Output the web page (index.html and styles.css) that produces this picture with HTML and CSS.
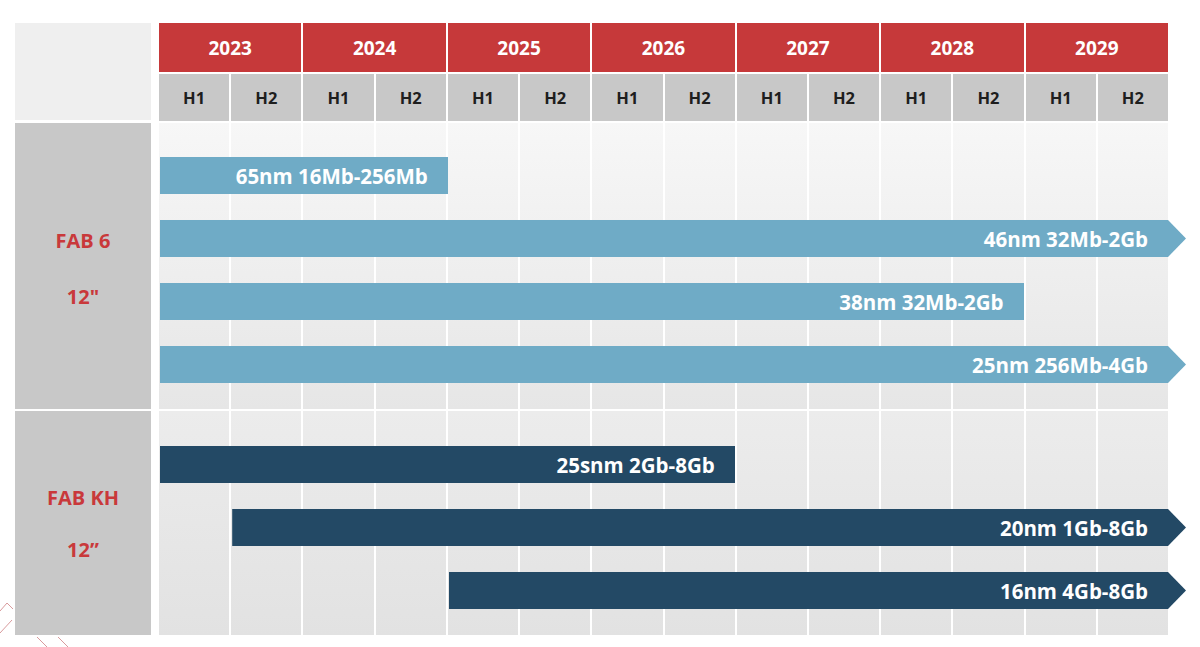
FILE: index.html
```html
<!DOCTYPE html>
<html>
<head>
<meta charset="utf-8">
<link rel="stylesheet" href="styles.css">
</head>
<body>
<div class="page">
  <div class="chart">
    <div class="corner"></div>
    <div class="header">
      <div class="year">2023</div><div class="year">2024</div><div class="year">2025</div><div class="year">2026</div><div class="year">2027</div><div class="year">2028</div><div class="year">2029</div>
      <div class="half">H1</div><div class="half">H2</div>
      <div class="half">H1</div><div class="half">H2</div>
      <div class="half">H1</div><div class="half">H2</div>
      <div class="half">H1</div><div class="half">H2</div>
      <div class="half">H1</div><div class="half">H2</div>
      <div class="half">H1</div><div class="half">H2</div>
      <div class="half">H1</div><div class="half">H2</div>
    </div>

    <div class="label label-fab6"><span>FAB 6</span><span>12"</span></div>
    <div class="lane lane-fab6">
      <div class="col" style="grid-column:1"></div><div class="col" style="grid-column:2"></div><div class="col" style="grid-column:3"></div><div class="col" style="grid-column:4"></div><div class="col" style="grid-column:5"></div><div class="col" style="grid-column:6"></div><div class="col" style="grid-column:7"></div><div class="col" style="grid-column:8"></div><div class="col" style="grid-column:9"></div><div class="col" style="grid-column:10"></div><div class="col" style="grid-column:11"></div><div class="col" style="grid-column:12"></div><div class="col" style="grid-column:13"></div><div class="col" style="grid-column:14"></div>
      <div class="bar light extend" style="grid-row:2;grid-column:1 / 5">65nm 16Mb-256Mb</div>
      <div class="bar light arrow" style="grid-row:3;grid-column:1 / 15">46nm 32Mb-2Gb</div>
      <div class="bar light" style="grid-row:4;grid-column:1 / 13">38nm 32Mb-2Gb</div>
      <div class="bar light arrow" style="grid-row:5;grid-column:1 / 15">25nm 256Mb-4Gb</div>
    </div>

    <div class="label label-kh"><span>FAB KH</span><span>12”</span></div>
    <div class="lane lane-kh">
      <div class="col" style="grid-column:1"></div><div class="col" style="grid-column:2"></div><div class="col" style="grid-column:3"></div><div class="col" style="grid-column:4"></div><div class="col" style="grid-column:5"></div><div class="col" style="grid-column:6"></div><div class="col" style="grid-column:7"></div><div class="col" style="grid-column:8"></div><div class="col" style="grid-column:9"></div><div class="col" style="grid-column:10"></div><div class="col" style="grid-column:11"></div><div class="col" style="grid-column:12"></div><div class="col" style="grid-column:13"></div><div class="col" style="grid-column:14"></div>
      <div class="bar dark" style="grid-row:2;grid-column:1 / 9">25snm 2Gb-8Gb</div>
      <div class="bar dark arrow" style="grid-row:3;grid-column:2 / 15">20nm 1Gb-8Gb</div>
      <div class="bar dark arrow" style="grid-row:4;grid-column:5 / 15">16nm 4Gb-8Gb</div>
    </div>
  </div>
  <svg class="deco" width="80" height="60" viewBox="0 0 80 60">
    <path d="M0 24 L7 16 L13 22" />
    <path d="M0 46 L12 33" />
    <path d="M37 50 L47 60" />
    <path d="M58 50 L68 60" />
  </svg>
</div>
</body>
</html>
```
FILE: styles.css
```css
* { box-sizing: border-box; }
html, body {
  margin: 0;
  padding: 0;
  background: #ffffff;
}
body {
  font-family: "Open Sans", "Liberation Sans", Arial, sans-serif;
  width: 1200px;
  height: 647px;
  overflow: hidden;
}
.page {
  position: relative;
  width: 1200px;
  height: 647px;
  padding: 23px 0 0 15px;
}
.chart {
  display: grid;
  grid-template-columns: 136px 1009px;
  grid-template-rows: 98px 286px 224px;
  column-gap: 8px;
  row-gap: 2px;
}
.corner {
  background: #efefef;
  margin-bottom: 1px;
}
.header {
  display: grid;
  grid-template-columns: repeat(14, 1fr);
  grid-template-rows: 49px 47px;
  gap: 2px;
  margin-bottom: 1px;
}
.year {
  grid-column: span 2;
  background: #c6393a;
  color: #ffffff;
  font-weight: 700;
  font-size: 19px;
  display: flex;
  align-items: center;
  justify-content: center;
}
.half {
  background: #c8c8c8;
  color: #1e1e1e;
  font-weight: 700;
  font-size: 16.5px;
  display: flex;
  align-items: center;
  justify-content: center;
}
.label {
  background: #c8c8c8;
  color: #c9393b;
  font-weight: 700;
  font-size: 20px;
  display: flex;
  flex-direction: column;
  align-items: center;
  justify-content: center;
  line-height: 27px;
}
.label-fab6 { gap: 29px; padding-top: 4px; }
.label-kh { gap: 25px; }
.lane {
  display: grid;
  grid-template-columns: repeat(14, 1fr);
  column-gap: 2px;
  row-gap: 26px;
  background: #ffffff;
}
.lane-fab6 {
  grid-template-rows: 8px 37px 37px 37px 37px 0px;
}
.lane-kh {
  grid-template-rows: 9px 37px 37px 37px 0px;
}
.col {
  grid-row: 1 / -1;
}
.lane-fab6 .col {
  background: linear-gradient(#f7f7f7, #e6e6e6);
}
.lane-kh .col {
  background: linear-gradient(#ececec, #e2e2e2);
}
.bar {
  color: #ffffff;
  font-weight: 700;
  font-size: 20.5px;
  display: flex;
  align-items: center;
  justify-content: flex-end;
  padding-right: 20px;
  margin-left: 1px;
  white-space: nowrap;
}
.light { background: #6fabc6; }
.dark { background: #234965; }
.extend { margin-right: -2px; }
.arrow {
  margin-right: -18px;
  padding-right: 38px;
  clip-path: polygon(0 0, calc(100% - 18px) 0, 100% 50%, calc(100% - 18px) 100%, 0 100%);
}
.deco {
  position: absolute;
  left: 0;
  top: 587px;
}
.deco path {
  fill: none;
  stroke: #d89a9c;
  stroke-width: 1;
}
```
